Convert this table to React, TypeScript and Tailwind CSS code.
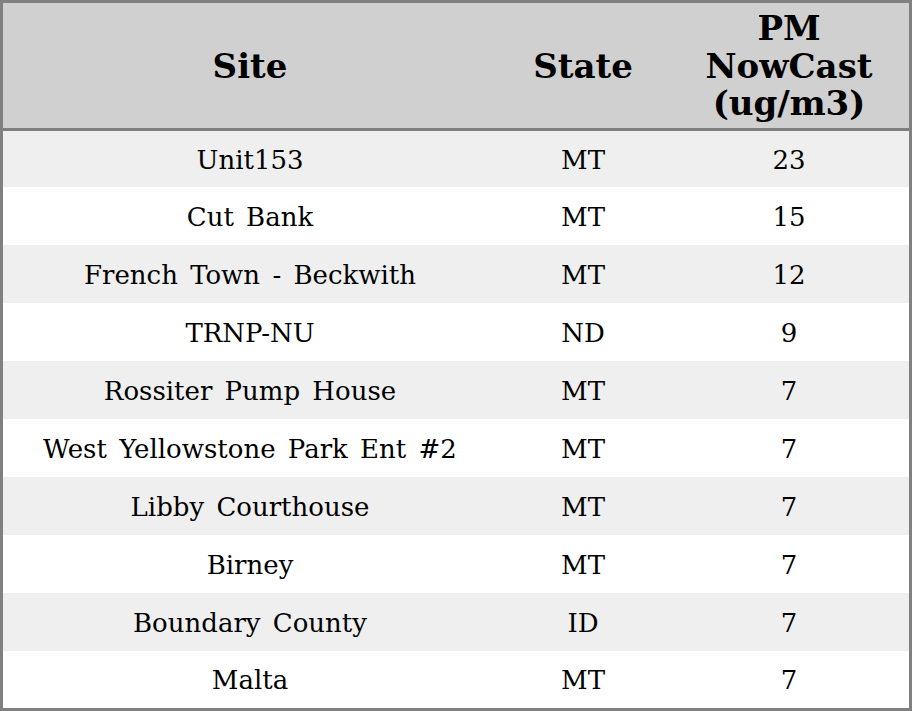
import React from 'react';

type Row = { site: string; state: string; pm: number };

const rows: Row[] = [
  { site: 'Unit153', state: 'MT', pm: 23 },
  { site: 'Cut Bank', state: 'MT', pm: 15 },
  { site: 'French Town - Beckwith', state: 'MT', pm: 12 },
  { site: 'TRNP-NU', state: 'ND', pm: 9 },
  { site: 'Rossiter Pump House', state: 'MT', pm: 7 },
  { site: 'West Yellowstone Park Ent #2', state: 'MT', pm: 7 },
  { site: 'Libby Courthouse', state: 'MT', pm: 7 },
  { site: 'Birney', state: 'MT', pm: 7 },
  { site: 'Boundary County', state: 'ID', pm: 7 },
  { site: 'Malta', state: 'MT', pm: 7 },
];

function App() {
  return (
    <div className="w-[912px] h-[711px] bg-white font-['DejaVu_Serif',serif] text-black">
      <table className="w-[912px] table-fixed border-separate border-spacing-0 border-[3px] border-[#808080]">
        <colgroup>
          <col className="w-[494px]" />
          <col className="w-[172px]" />
          <col className="w-[240px]" />
        </colgroup>
        <thead>
          <tr className="bg-[#d0d0d0] text-[34px] font-bold leading-[37.5px]">
            <th className="h-[128px] border-b-[3px] border-[#808080] p-0 pt-[2px] text-center align-middle">Site</th>
            <th className="h-[128px] border-b-[3px] border-[#808080] p-0 pt-[2px] text-center align-middle">State</th>
            <th className="h-[128px] border-b-[3px] border-[#808080] p-0 pt-[2px] text-center align-middle">
              <span className="block">PM</span>
              <span className="block">NowCast</span>
              <span className="block">(ug/m3)</span>
            </th>
          </tr>
        </thead>
        <tbody className="text-[26px] [word-spacing:4px]">
          {rows.map((r, i) => {
            // first and last rows come out a little shorter in the original
            const h = i === 0 ? 'h-[56px]' : i === rows.length - 1 ? 'h-[57px]' : 'h-[58px]';
            return (
              <tr key={r.site} className={`${h} ${i % 2 === 0 ? 'bg-[#efefef]' : 'bg-white'}`}>
                <td className="p-0 pt-[2px] text-center align-middle">{r.site}</td>
                <td className="p-0 pt-[2px] text-center align-middle">{r.state}</td>
                <td className="p-0 pt-[2px] text-center align-middle">{r.pm}</td>
              </tr>
            );
          })}
        </tbody>
      </table>
    </div>
  );
}

export default App;
